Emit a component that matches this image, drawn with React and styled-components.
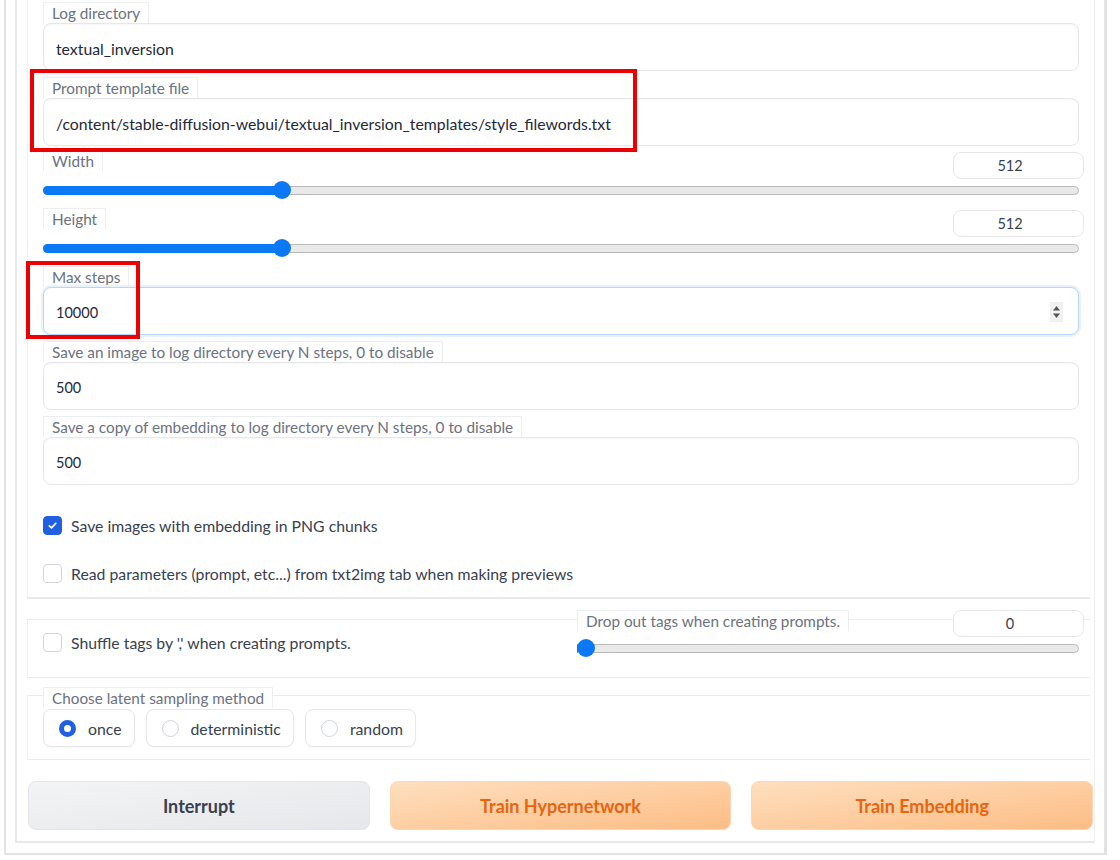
import React from 'react'
import styled, { createGlobalStyle } from 'styled-components'

const GlobalStyle = createGlobalStyle`
  html, body { margin: 0; padding: 0; background: #fff; }
  body { font-family: Lato, "Noto Sans", sans-serif; overflow: hidden; }
  * { box-sizing: border-box; }
`

const Page = styled.div`
  position: relative;
  width: 1120px;
  height: 860px;
  overflow: hidden;
`

const Outer = styled.div`
  margin-left: 4px;
  width: 1103px;
  border: 2px solid #e3e3e3;
  border-top: none;
  border-right-width: 3px;
  padding: 0 9px 10px 9px;
`

const Inner = styled.div`
  border-left: 2px solid #e8e8e8;
  border-right: 1px solid #efefef;
  border-bottom: 2px solid #e8e8e8;
  padding: 0 1px 11px 10px;
  display: flex;
  flex-direction: column;
`

const Panel = styled.div`
  margin-right: 3px;
  border-left: 1px solid #f0f0f0;
  border-bottom: 2px solid #e9e9e9;
  padding: 2px 11px 0 15px;
  display: flex;
  flex-direction: column;
  gap: 6px;
`

const Field = styled.div`
  display: flex;
  flex-direction: column;
`

const Label = styled.span`
  align-self: flex-start;
  height: 21px;
  line-height: 20px;
  padding: 0 8px;
  font-size: 15.3px;
  color: #6b7280;
  background: #fff;
  border: 1px solid #eceef1;
  border-bottom: none;
  white-space: nowrap;
`

const TextBox = styled.div`
  position: relative;
  height: 48px;
  display: flex;
  align-items: center;
  padding: 2px 12px 0;
  font-size: ${p => (p.$small ? '14.5px' : '15.8px')};
  color: #1f2937;
  background: #fff;
  border: 1px solid ${p => (p.$focus ? '#b9d5f7' : '#e5e7eb')};
  border-radius: 8px;
  box-shadow: ${p =>
    p.$focus ? '0 0 0 2px #e8f2fd' : 'inset 0 1px 2px rgba(0,0,0,0.04)'};
`

const Spinner = styled.div`
  margin-left: auto;
  margin-right: 3px;
  width: 13px;
  height: 20px;
  background: #f1f1f1;
  display: flex;
  align-items: center;
  justify-content: center;
`

const SliderBlock = styled.div`
  display: flex;
  flex-direction: column;
  margin-top: ${p => p.$mt || 0}px;
  height: ${p => p.$h || 52}px;
`

const SliderHead = styled.div`
  display: flex;
  align-items: flex-start;
  justify-content: space-between;
  height: 28px;
`

const NumBox = styled.div`
  width: 131px;
  height: 27px;
  margin-top: ${p => p.$mt || 0}px;
  margin-right: -5px;
  padding-right: 17px;
  display: flex;
  align-items: center;
  justify-content: center;
  font-size: 14.5px;
  color: #374151;
  background: #fff;
  border: 1px solid #e5e7eb;
  border-radius: 8px;
`

const TrackWrap = styled.div`
  position: relative;
  height: 18px;
  margin-top: ${p => p.$mt || 3}px;
  display: flex;
  align-items: center;
`

const Track = styled.div`
  position: relative;
  width: 100%;
  height: 9px;
  background: #e9e9e9;
  border: 1px solid #b9b9b9;
  border-radius: 5px;
`

const Fill = styled.div`
  position: absolute;
  left: -1px;
  top: -1px;
  height: 9px;
  background: #0b78f5;
  border-radius: 5px 0 0 5px;
`

const Thumb = styled.div`
  position: absolute;
  top: 0;
  width: 18px;
  height: 18px;
  margin-left: -9px;
  border-radius: 50%;
  background: #0b78f5;
`

const CheckRow = styled.label`
  display: flex;
  align-items: center;
  gap: 9px;
  height: ${p => p.$h || 48}px;
  font-size: 15.8px;
  color: #374151;
`

const Box = styled.span`
  flex: none;
  width: 19px;
  height: 19px;
  border-radius: 4px;
  display: inline-flex;
  align-items: center;
  justify-content: center;
  background: ${p => (p.$on ? '#2160e0' : '#fff')};
  border: 1px solid ${p => (p.$on ? '#2160e0' : '#d1d5db')};
`

const Panel2 = styled.div`
  margin-top: 20px;
  margin-right: 3px;
  height: 59px;
  border-top: 1px solid #ececec;
  border-bottom: 1px solid #ececec;
  border-left: 1px solid #f0f0f0;
  padding: 0 11px 0 15px;
  display: grid;
  grid-template-columns: 1fr 502px;
  gap: 20px;
`

const LeftCell = styled.div`
  padding-top: 12px;
`

const RightCell = styled.div`
  margin-top: -10px;
`

const Group = styled.div`
  margin-top: 17px;
  margin-right: 3px;
  border-top: 1px solid #ececec;
  border-bottom: 1px solid #ececec;
  border-left: 1px solid #f0f0f0;
  padding: 0 11px 12px 15px;
  display: flex;
  flex-direction: column;
`

const Legend = styled(Label)`
  margin-top: -9px;
  border-bottom: 1px solid #fff;
`

const Radios = styled.div`
  display: flex;
  gap: 11px;
  margin-top: 1px;
`

const RadioPill = styled.label`
  height: 38px;
  display: flex;
  align-items: center;
  gap: 12px;
  padding: 0 12px 0 15px;
  font-size: 15.8px;
  color: #374151;
  background: #fff;
  border: 1px solid #e5e7eb;
  border-radius: 8px;
  box-shadow: 0 1px 2px rgba(0,0,0,0.04);
`

const Dot = styled.span`
  width: 17px;
  height: 17px;
  border-radius: 50%;
  background: #fff;
  border: ${p => (p.$on ? '5px solid #2160e0' : '1px solid #d1d5db')};
`

const Buttons = styled.div`
  margin-top: 21px;
  margin-left: 1px;
  display: grid;
  grid-template-columns: repeat(3, 1fr);
  gap: 20px;
`

const Button = styled.button`
  height: 49px;
  border-radius: 8px;
  font-family: inherit;
  font-size: 18px;
  font-weight: 700;
  cursor: pointer;
  color: ${p => (p.$primary ? '#e8650f' : '#374151')};
  background: ${p =>
    p.$primary
      ? 'linear-gradient(to bottom right, #fedfbf, #fdbd85)'
      : 'linear-gradient(to bottom right, #f3f4f6, #e6e7ea)'};
  border: 1px solid ${p => (p.$primary ? '#fdd6b0' : '#e3e5e8')};
`

const Mark = styled.div`
  position: absolute;
  border: 4px solid #ee0000;
  pointer-events: none;
`

function Slider({ label, value, min, max, mt, h, trackMt, numMt }) {
  const pct = ((value - min) / (max - min)) * 100
  return (
    <SliderBlock $mt={mt} $h={h}>
      <SliderHead>
        <Label>{label}</Label>
        <NumBox $mt={numMt}>{value}</NumBox>
      </SliderHead>
      <TrackWrap $mt={trackMt}>
        <Track>
          <Fill style={{ width: `calc(${pct}% + 1px)` }} />
        </Track>
        <Thumb style={{ left: `calc(9px + (100% - 18px) * ${pct / 100})` }} />
      </TrackWrap>
    </SliderBlock>
  )
}

function Check({ on, children, h }) {
  return (
    <CheckRow $h={h}>
      <Box $on={on}>
        {on && (
          <svg width="11" height="11" viewBox="0 0 12 12">
            <path d="M2.5 6.3 L5 8.6 L9.6 3.6" fill="none" stroke="#fff" strokeWidth="1.8" strokeLinecap="round" strokeLinejoin="round" />
          </svg>
        )}
      </Box>
      {children}
    </CheckRow>
  )
}

export default function App() {
  return (
    <Page>
      <GlobalStyle />
      <Outer>
        <Inner>
          <Panel>
            <Field>
              <Label>Log directory</Label>
              <TextBox>textual_inversion</TextBox>
            </Field>
            <Field>
              <Label>Prompt template file</Label>
              <TextBox>/content/stable-diffusion-webui/textual_inversion_templates/style_filewords.txt</TextBox>
            </Field>
            <Slider label="Width" value={512} min={64} max={2048} mt={-2} numMt={2} />
            <Slider label="Height" value={512} min={64} max={2048} numMt={2} />
            <Field>
              <Label>Max steps</Label>
              <TextBox $focus $small>
                10000
                <Spinner>
                  <svg width="9" height="14" viewBox="0 0 9 14">
                    <path d="M4.5 1 L8 5.5 L1 5.5 Z" fill="#555" />
                    <path d="M4.5 13 L8 8.5 L1 8.5 Z" fill="#555" />
                  </svg>
                </Spinner>
              </TextBox>
            </Field>
            <Field>
              <Label>Save an image to log directory every N steps, 0 to disable</Label>
              <TextBox $small>500</TextBox>
            </Field>
            <Field>
              <Label>Save a copy of embedding to log directory every N steps, 0 to disable</Label>
              <TextBox $small>500</TextBox>
            </Field>
            <div style={{ marginTop: 10 }}>
              <Check on>Save images with embedding in PNG chunks</Check>
              <Check>Read parameters (prompt, etc...) from txt2img tab when making previews</Check>
            </div>
          </Panel>

          <Panel2>
            <LeftCell>
              <Check h={21}>Shuffle tags by ',' when creating prompts.</Check>
            </LeftCell>
            <RightCell>
              <Slider label="Drop out tags when creating prompts." value={0} min={0} max={1} h={50} trackMt={1} />
            </RightCell>
          </Panel2>

          <Group>
            <Legend>Choose latent sampling method</Legend>
            <Radios>
              <RadioPill><Dot $on />once</RadioPill>
              <RadioPill><Dot />deterministic</RadioPill>
              <RadioPill><Dot />random</RadioPill>
            </Radios>
          </Group>

          <Buttons>
            <Button>Interrupt</Button>
            <Button $primary>Train Hypernetwork</Button>
            <Button $primary>Train Embedding</Button>
          </Buttons>
        </Inner>
      </Outer>
      <Mark style={{ left: 30, top: 69, width: 607, height: 83 }} />
      <Mark style={{ left: 26, top: 261, width: 114, height: 78 }} />
    </Page>
  )
}
